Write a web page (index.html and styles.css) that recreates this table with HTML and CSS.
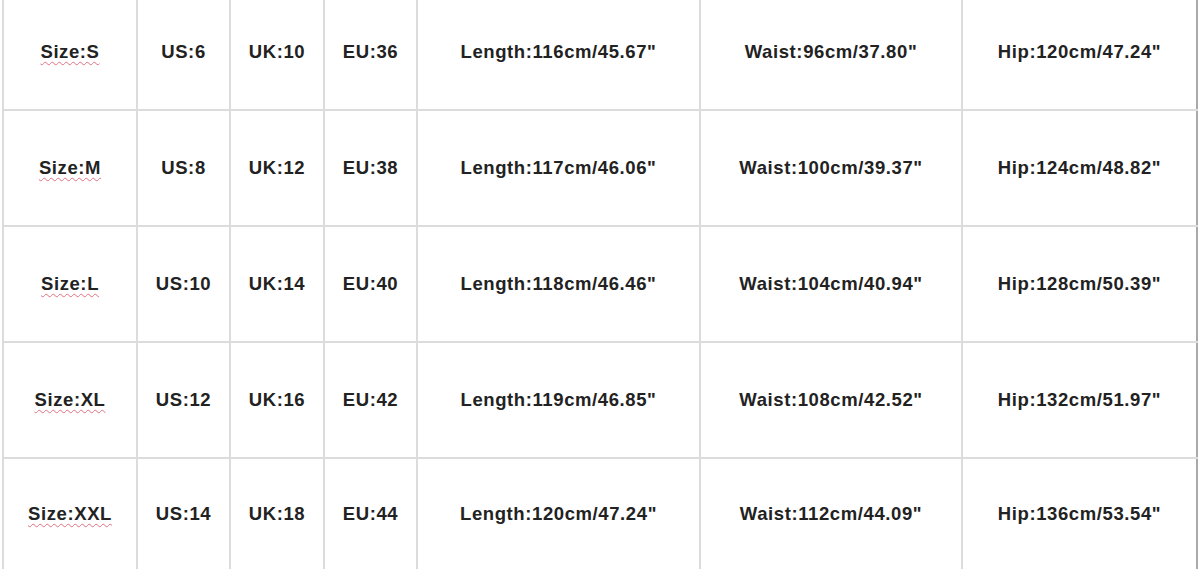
FILE: index.html
```html
<!DOCTYPE html>
<html>
<head>
<meta charset="utf-8">
<link rel="stylesheet" href="styles.css">
</head>
<body>
<table class="sizes">
  <colgroup>
    <col class="c-size"><col class="c-us"><col class="c-uk"><col class="c-eu"><col class="c-len"><col class="c-waist"><col class="c-hip">
  </colgroup>
  <tbody>
    <tr>
      <td><span class="spell">Size:S</span></td><td>US:6</td><td>UK:10</td><td>EU:36</td>
      <td>Length:116cm/45.67"</td><td>Waist:96cm/37.80"</td><td>Hip:120cm/47.24"</td>
    </tr>
    <tr>
      <td><span class="spell">Size:M</span></td><td>US:8</td><td>UK:12</td><td>EU:38</td>
      <td>Length:117cm/46.06"</td><td>Waist:100cm/39.37"</td><td>Hip:124cm/48.82"</td>
    </tr>
    <tr>
      <td><span class="spell">Size:L</span></td><td>US:10</td><td>UK:14</td><td>EU:40</td>
      <td>Length:118cm/46.46"</td><td>Waist:104cm/40.94"</td><td>Hip:128cm/50.39"</td>
    </tr>
    <tr>
      <td><span class="spell">Size:XL</span></td><td>US:12</td><td>UK:16</td><td>EU:42</td>
      <td>Length:119cm/46.85"</td><td>Waist:108cm/42.52"</td><td>Hip:132cm/51.97"</td>
    </tr>
    <tr class="last">
      <td><span class="spell">Size:XXL</span></td><td>US:14</td><td>UK:18</td><td>EU:44</td>
      <td>Length:120cm/47.24"</td><td>Waist:112cm/44.09"</td><td>Hip:136cm/53.54"</td>
    </tr>
  </tbody>
</table>
</body>
</html>
```

FILE: styles.css
```css
html, body {
  margin: 0;
  padding: 0;
  background: #ffffff;
  overflow: hidden;
}

.sizes {
  margin: -5px 0 0 2px;
  width: 1196px;
  table-layout: fixed;
  border-collapse: collapse;
  font-family: "Liberation Sans", Arial, sans-serif;
  font-weight: bold;
  font-size: 18.5px;
  letter-spacing: 0.6px;
  color: #222222;
}

.c-size { width: 134px; }
.c-us { width: 93px; }
.c-uk { width: 94px; }
.c-eu { width: 93px; }
.c-len { width: 283px; }
.c-waist { width: 262px; }
.c-hip { width: 235px; }

.sizes td {
  height: 114px;
  padding: 0;
  text-align: center;
  vertical-align: middle;
  border: 2px solid #dcdcdc;
  white-space: nowrap;
}

.sizes tr:first-child td {
  border-top: 0;
}

.sizes td:last-child {
  border-right: 2px solid #a9a9a9;
}

.sizes tr.last td {
  height: 110px;
  border-bottom: 0;
}

.spell {
  text-decoration: underline wavy #e07080;
  text-decoration-thickness: 1px;
  text-underline-offset: 3px;
}
```
